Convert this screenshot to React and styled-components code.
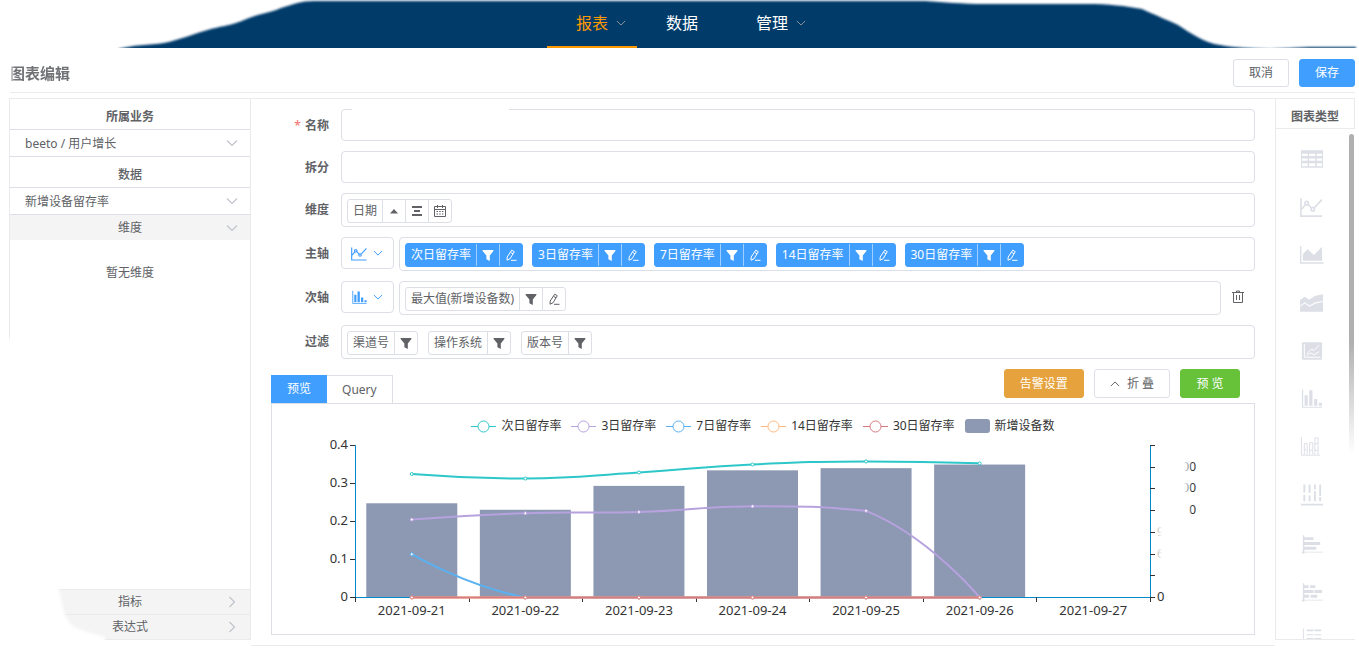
import React, { useState } from 'react'
import styled, { createGlobalStyle } from 'styled-components'

const colors = {
  navy: '#003a6b',
  orange: '#ff9900',
  blue: '#409eff',
  green: '#67c23a',
  amber: '#e6a23c',
  red: '#f56c6c',
  text: '#606266',
  border: '#dcdfe6',
  line: '#ebebeb',
  muted: '#c0c4cc',
  grey: '#f4f4f4',
}

const GlobalStyle = createGlobalStyle`
  *, *::before, *::after {
    box-sizing: border-box;
  }

  body {
    margin: 0;
    background: #fff;
    color: ${colors.text};
    font: 12px/18px "Noto Sans", "Noto Sans CJK SC", sans-serif;
  }

  button, input, select {
    font: inherit;
    color: inherit;
  }

  button {
    cursor: pointer;
  }

  svg {
    display: block;
  }
`

/* ---------- icons ---------- */

const Chevron = ({ size = 10, up, right }) => {
  let d = 'M1 3.5 6 8.5 11 3.5'
  if (up) d = 'M1 8.5 6 3.5 11 8.5'
  if (right) d = 'M3.5 1 8.5 6 3.5 11'
  return (
    <svg width={size} height={size} viewBox="0 0 12 12" fill="none" stroke="currentColor" strokeWidth="1.2" aria-hidden="true">
      <path d={d} />
    </svg>
  )
}

const FunnelIcon = () =>
  <svg width="12" height="12" viewBox="0 0 12 12" fill="currentColor" aria-hidden="true">
    <path d="M.6 1h10.8v1L7.8 6.4V12L4.4 10.3V6.4L.6 2z" />
  </svg>

const PencilIcon = () =>
  <svg width="12" height="12" viewBox="0 0 12 12" fill="none" stroke="currentColor" aria-hidden="true">
    <path d="M6.700 1.200 9.300 2.700 5 9.800 2 11.200 2.200 8zM5.500 3.300 8 4.800M6 11.300h5.500" />
  </svg>

const CaretIcon = () =>
  <svg width="12" height="12" viewBox="0 0 12 12" fill="currentColor" aria-hidden="true">
    <path d="M2 8.500 6 4l4 4.500z" />
  </svg>

const AlignIcon = () =>
  <svg width="12" height="12" viewBox="0 0 12 12" fill="currentColor" aria-hidden="true">
    <path d="M1 1h10v2H1zM3 5h6v2H3zM1 9h10v2H1z" />
  </svg>

const CalendarIcon = () =>
  <svg width="12" height="12" viewBox="0 0 12 12" fill="none" stroke="currentColor" aria-hidden="true">
    <path d="M.5 1.500h11v10H.5zM.5 4.500h11M3.500 0v3M8.500 0v3" />
    <path d="M2.500 6.500h7M2.500 9h7" strokeDasharray="1.500 1.200" />
  </svg>

const TrashIcon = () =>
  <svg width="12" height="14" viewBox="0 0 12 14" fill="none" stroke="currentColor" aria-hidden="true">
    <path d="M0 2.500h12M4.500 2.500V1h3v1.500M1.500 2.500v10h9v-10M4.500 5v5M7.500 5v5" />
  </svg>

const LineGlyph = () =>
  <g fill="none" stroke="currentColor" strokeWidth="1.700">
    <path d="M1 3v18.500h22M1.700 14.300 5.700 9.500M8.500 9.300l3.500 3.700M15 12.800l7.700-8.500" />
    <circle cx="7" cy="8" r="1.800" />
    <circle cx="13.300" cy="14.300" r="1.800" />
  </g>

const BarGlyph = () =>
  <path d="M2 2h1.300v18H23v1.200H2zM4.800 8H8v11H4.800zM9.600 3H13v16H9.600zM14.700 12H18v7h-3.300zM19.700 16H23v3h-3.300z" />

const glyphs = {
  表格: (
    <path
      fillRule="evenodd"
      d="M1 3h23v18H1zM2 6.500v2.300h6V6.500zM9.500 6.500v2.300h6.500V6.500zM17.500 6.500v2.300H23V6.500zM2 11.500v2.300h6v-2.300zM9.500 11.500v2.300h6.500v-2.300zM17.500 11.500v2.300H23v-2.300zM2 16.500v3h6v-3zM9.500 16.500v3h6.500v-3zM17.500 16.500v3H23v-3z"
    />
  ),
  折线图: <LineGlyph />,
  面积图: <path d="M0 3h1.500v16.500H24.500V21H0zM3 18v-7L8 6l6.500 6L23 3.500V18z" />,
  堆叠面积图: (
    <path d="M0 9l5-3.500 4.500 3L16 4.500 24 3v6.800L16 11.200 10 14.500 5 11.200 0 14.800zM0 16l5-3.500 5 3.500 6-3.500L24 11v10H0z" />
  ),
  多线图: (
    <>
      <rect x="2" y="3" width="21" height="18" rx="1" />
      <path
        d="M4.500 4.500v14H21.500M7 15l5-5 2.500 1.500L20 6M7 17l4-3 3.500 2L20 12.500"
        fill="none"
        stroke="#fff"
      />
    </>
  ),
  柱状图: <BarGlyph />,
  堆叠柱状图: (
    <path
      d="M1.500 1.500V20.500H21M4.500 20V8.500H7.500V20M4.500 16l1.500-1.500L7.500 16M10 20V7.500h3.300V20M10 15.500h3.300M15.500 20V2.500h3.300V20M15.500 8.500h3.300M15.500 15.500h3.300"
      fill="none"
      stroke="currentColor"
    />
  ),
  百分比柱状图: (
    <path d="M3.500 1h2v8.500h-2zM3.500 12h2v6.500h-2zM9 1h2v9H9zM9 12.500h2v6H9zM14.500 1h2v5h-2zM14.500 8h2v10.500h-2zM20 1h2v12h-2zM20 14h2v4.500h-2zM1 21h23v2H1z" />
  ),
  条形图: <path d="M3 4h1.500v2h9.500v3H4.500v2H21v3H4.500v2H17v3H4.500v2H24v1H4.500v1.500H3V22H1v-1h2z" />,
  堆叠条形图: (
    <path d="M3 4h1.500v2H9v3H4.500v2H14v3H4.500v2H9.500v3H4.500v2H24v1H4.500v1.500H3V22H1v-1h2zM10.500 6H16v3h-5.500zM15 11h8v3h-8zM11 16h7v3h-7z" />
  ),
  百分比条形图: <path d="M3 1h1v20H3zM7 2h7v2H7zM15 2h7v2h-7zM7 7h7v1H7zM15 7h7v1h-7zM7 11h7v2H7zM15 11h7v2h-7z" />,
}

const ChartGlyph = ({ name, size = 24 }) =>
  <svg width={size} height={size} viewBox="0 0 25 24" fill="currentColor" aria-hidden="true">
    {glyphs[name]}
  </svg>

/* ---------- top bar ---------- */

const TopBar = styled.header`
  position: relative;
  height: 48px;
  overflow: hidden;
`

const Ridge = styled.svg`
  position: absolute;
  inset: 0;
  width: 100%;
  height: 100%;
`

const Nav = styled.nav`
  position: relative;
  display: flex;
  justify-content: center;
  height: 100%;
  padding-left: 5px;
`

const NavLink = styled.a`
  display: flex;
  align-items: center;
  gap: 8px;
  width: 90px;
  padding-left: 29px;
  border-bottom: 2px solid ${p => (p.$active ? colors.orange : 'transparent')};
  color: ${p => (p.$active ? colors.orange : '#fff')};
  font-size: 16px;
  line-height: 24px;
  text-decoration: none;
  white-space: nowrap;

  svg {
    color: #909399;
  }
`

/* ---------- page head ---------- */

const PageHead = styled.div`
  display: flex;
  align-items: center;
  justify-content: space-between;
  height: 45px;
  margin: 0 4px 5px 10px;
  padding-top: 5px;
  border-bottom: 1px solid ${colors.line};
`

const Title = styled.h1`
  margin: 0;
  color: #707275;
  font-size: 15px;
  font-weight: 700;
  line-height: 20px;
  mask-image: linear-gradient(90deg, rgba(0, 0, 0, 0.2), #000 5px);
`

const Actions = styled.div`
  display: flex;
  gap: 10px;
`

const Button = styled.button`
  display: flex;
  align-items: center;
  justify-content: center;
  gap: 7px;
  height: ${p => (p.$roomy ? 29 : 28)}px;
  min-width: ${p => (p.$roomy ? 60 : 56)}px;
  padding: 0 15px;
  border: 1px solid ${p => p.$color || colors.border};
  border-radius: 3px;
  background: ${p => p.$color || '#fff'};
  color: ${p => (p.$color ? '#fff' : colors.text)};
  white-space: pre;
`

/* ---------- workspace ---------- */

const Workspace = styled.main`
  display: grid;
  grid-template-columns: 242px minmax(0, 1fr) 80px;
  margin: 0 4px 0 9px;
  border-top: 1px solid ${colors.line};
`

const Side = styled.aside`
  position: relative;
  display: flex;
  flex-direction: column;
  margin-bottom: 6px;
  border: solid ${colors.line};
  border-width: 0 1px 1px;
`

const SideTitle = styled.label`
  height: 31px;
  padding-top: 9px;
  border-bottom: 1px solid ${colors.border};
  font-weight: ${p => (p.$strong ? 700 : 500)};
  text-align: center;
`

const SelectWrap = styled.div`
  position: relative;
  border-bottom: 1px solid ${colors.border};

  svg {
    position: absolute;
    top: 7px;
    right: 12px;
    color: ${colors.muted};
    pointer-events: none;
  }
`

const Select = styled.select`
  display: block;
  width: 100%;
  height: 26px;
  padding: 2px 30px 0 15px;
  border: 0;
  background: none;
  appearance: none;
`

const Fold = styled.button`
  display: grid;
  grid-template-columns: 1fr auto 1fr;
  align-items: center;
  height: 25px;
  padding: 0 12px;
  border: 0;
  border-top: ${p => (p.$ruled ? `1px solid ${colors.line}` : 0)};
  background: ${colors.grey};

  svg {
    justify-self: end;
    color: ${colors.muted};
  }

  span {
    grid-column: 2;
  }
`

const Empty = styled.p`
  flex: 1;
  margin: 0;
  padding-top: 24px;
  text-align: center;
`

const Mist = styled.svg`
  position: absolute;
  left: -9px;
  bottom: -6px;
  pointer-events: none;
`

/* ---------- form ---------- */

const Editor = styled.section`
  padding: 10px 20px;
  border-bottom: 1px solid ${colors.line};
`

const Form = styled.form`
  display: grid;
  gap: 10px;
`

const Row = styled.div`
  display: grid;
  grid-template-columns: 58px minmax(0, 1fr);
  column-gap: 12px;
`

const Label = styled.label`
  padding-top: 8px;
  font-weight: 700;
  text-align: right;

  i {
    margin-right: 4px;
    color: ${colors.red};
    font-style: normal;
    font-weight: 400;
  }
`

const InputWrap = styled.div`
  position: relative;

  &::before {
    content: '';
    display: ${p => (p.$open ? 'block' : 'none')};
    position: absolute;
    top: 0;
    left: 11px;
    width: 157px;
    height: 1px;
    background: #fff;
  }
`

const Input = styled.input`
  display: block;
  width: 100%;
  height: 32px;
  padding: 0 15px;
  border: 1px solid ${colors.border};
  border-radius: 4px;
  background: #fff;
`

const Field = styled.div`
  display: flex;
  align-items: flex-start;
  gap: 5px;
`

const AxisButton = styled.button`
  display: flex;
  flex: none;
  align-items: center;
  justify-content: center;
  gap: 5px;
  width: 53px;
  height: 32px;
  padding: 0 2px 0 0;
  border: 1px solid ${colors.border};
  border-radius: 4px;
  background: #fff;
  color: ${colors.blue};
`

const TagBox = styled.div`
  display: flex;
  flex: 1;
  flex-wrap: wrap;
  gap: ${p => (p.$tight ? 9 : 10)}px;
  min-height: 34px;
  padding: 5px 5px 3px;
  border: 1px solid ${colors.border};
  border-radius: 4px;
`

const TagShell = styled.div`
  display: flex;
  height: 24px;
  border: 1px solid ${p => (p.$filled ? colors.blue : colors.border)};
  border-radius: 3px;
  background: ${p => (p.$filled ? colors.blue : '#fff')};
  color: ${p => (p.$filled ? '#fff' : colors.text)};

  span {
    padding: 2px 5px;
    white-space: nowrap;
  }

  button {
    display: grid;
    place-items: center;
    width: 23px;
    padding: 0;
    border: 0;
    border-left: 1px solid ${p => (p.$filled ? '#a0cfff' : colors.border)};
    background: none;
  }
`

const DeleteButton = styled.button`
  display: grid;
  place-items: center;
  width: 24px;
  height: 32px;
  margin-right: 5px;
  padding: 0;
  border: 0;
  background: none;
`

const Tag = ({ text, filled, tools }) =>
  <TagShell $filled={filled}>
    <span>{text}</span>
    {tools.map(([name, Icon]) =>
      <button type="button" key={name} aria-label={`${text}${name}`}><Icon /></button>
    )}
  </TagShell>

const filterTool = ['筛选', FunnelIcon]
const editTool = ['编辑', PencilIcon]
const dateTools = [['排序', CaretIcon], ['对齐', AlignIcon], ['日历', CalendarIcon]]

/* ---------- preview ---------- */

const PreviewBar = styled.div`
  display: flex;
  align-items: flex-start;
  justify-content: space-between;
  height: 34px;
  margin-top: 10px;
  padding-right: 15px;
`

const Tabs = styled.div`
  display: flex;
  margin-top: 6px;
`

const Tab = styled.button`
  height: 28px;
  padding: 0 15px;
  border: 1px solid ${p => (p.$active ? colors.blue : colors.border)};
  border-bottom-width: ${p => (p.$active ? 1 : 0)}px;
  border-left-width: ${p => (p.$active ? 1 : 0)}px;
  background: ${p => (p.$active ? colors.blue : '#fff')};
  color: ${p => (p.$active ? '#fff' : colors.text)};
`

const ChartBox = styled.div`
  padding-top: 13px;
  border: 1px solid ${colors.border};
`

const Legend = styled.div`
  display: flex;
  flex-wrap: wrap;
  justify-content: center;
  gap: 10px;
`

const LegendItem = styled.button`
  display: flex;
  align-items: center;
  gap: 5px;
  padding: 0;
  border: 0;
  background: none;
  color: #333;
`

const Plot = styled.svg`
  width: 100%;
  height: auto;
  font-size: 13px;
`

const days = ['2021-09-21', '2021-09-22', '2021-09-23', '2021-09-24', '2021-09-25', '2021-09-26', '2021-09-27']

const series = [
  { name: '次日留存率', color: '#2ec7c9', data: [0.325, 0.313, 0.329, 0.35, 0.358, 0.353] },
  { name: '3日留存率', color: '#b6a2de', data: [0.205, 0.222, 0.225, 0.24, 0.228, 0] },
  { name: '7日留存率', color: '#5ab1ef', data: [0.114, 0, 0, 0, 0, 0] },
  { name: '14日留存率', color: '#ffb980', data: [0, 0, 0, 0, 0, 0] },
  { name: '30日留存率', color: '#d87a80', data: [0, 0, 0, 0, 0, 0] },
]

const devices = { name: '新增设备数', color: '#8d98b3', data: [12950, 12050, 15350, 17500, 17800, 18300] }

const plot = { left: 83, right: 878, top: 10, bottom: 162 }
const step = (plot.right - plot.left) / days.length
const centerX = i => plot.left + step * (i + 0.5)
const rateY = v => plot.bottom - (v / 0.4) * (plot.bottom - plot.top)
const countY = v => plot.bottom - (v / 21000) * (plot.bottom - plot.top)

// Smooth curve through the points, control points kept inside the series' own bounds
const smoothPath = points => {
  const ys = points.map(p => p[1])
  const clamp = y => Math.min(Math.max(y, Math.min(...ys)), Math.max(...ys))
  let out = points[0]
  let d = `M${points[0]}`
  for (let i = 1; i < points.length; i++) {
    const p = points[i]
    const prev = points[i - 1]
    const next = points[i + 1]
    let into = p
    let nextOut = p
    if (next) {
      const before = Math.hypot(p[0] - prev[0], p[1] - prev[1])
      const after = Math.hypot(next[0] - p[0], next[1] - p[1])
      const k = before / (before + after)
      const vx = (next[0] - prev[0]) * 0.5
      const vy = (next[1] - prev[1]) * 0.5
      into = [p[0] - vx * k, clamp(p[1] - vy * k)]
      nextOut = [p[0] + vx * (1 - k), clamp(p[1] + vy * (1 - k))]
    }
    d += `C${out} ${into} ${p}`
    out = nextOut
  }
  return d
}

const RetentionChart = () =>
  <Plot viewBox="0 0 982 199" role="img" aria-label="留存率">
    <defs>
      <linearGradient id="fadeIn" gradientUnits="userSpaceOnUse" x1="912" x2="920" y1="0" y2="0">
        <stop offset="0" stopColor="#333" stopOpacity="0" />
        <stop offset="1" stopColor="#333" />
      </linearGradient>
      <linearGradient id="fadeOut" gradientUnits="userSpaceOnUse" x1="885" x2="890" y1="0" y2="0">
        <stop offset="0" stopColor="#333" stopOpacity="0.35" />
        <stop offset="1" stopColor="#333" stopOpacity="0" />
      </linearGradient>
    </defs>

    <g fill="#008acd">
      <rect x={plot.left} y={plot.top} width="1" height={plot.bottom - plot.top} />
      <rect x={plot.right} y={plot.top} width="1" height={plot.bottom - plot.top} />
      <rect x={plot.left} y={plot.bottom} width={plot.right - plot.left} height="1" />
    </g>
    {devices.data.map((v, i) =>
      <rect
        key={days[i]}
        x={centerX(i) - 45.5}
        y={countY(v)}
        width="91"
        height={plot.bottom - countY(v)}
        fill={devices.color}
      />
    )}

    <g stroke="#333" shapeRendering="crispEdges">
      {[0, 0.1, 0.2, 0.3, 0.4].map(v =>
        <line key={v} x1={plot.left - 5} x2={plot.left} y1={rateY(v) + 0.5} y2={rateY(v) + 0.5} />
      )}
      {[0, 1, 2, 3, 4, 5, 6, 7].map(n =>
        <line key={n} x1={plot.right} x2={plot.right + 5} y1={countY(n * 3000) + 0.5} y2={countY(n * 3000) + 0.5} />
      )}
      {[0, 1, 2, 3, 4, 5, 6, 7].map(n =>
        <line key={n} x1={plot.left + step * n + 0.5} x2={plot.left + step * n + 0.5} y1={plot.bottom} y2={plot.bottom + 5} />
      )}
    </g>

    {series.map(s => {
      const points = s.data.map((v, i) => [centerX(i), rateY(v) + 0.5])
      return (
        <g key={s.name} stroke={s.color}>
          <path d={smoothPath(points)} fill="none" strokeWidth="2" />
          {points.map(([x, y]) => <circle key={x} cx={x} cy={y} r="1.500" fill="#fff" />)}
        </g>
      )
    })}

    <g fill="#333" textAnchor="end">
      {[0, 0.1, 0.2, 0.3, 0.4].map(v => <text key={v} x={plot.left - 7} y={rateY(v) + 4}>{v}</text>)}
    </g>
    <g fill="#333" textAnchor="middle">
      {days.map((day, i) => <text key={day} x={centerX(i)} y={plot.bottom + 18}>{day}</text>)}
    </g>
    <text x={plot.right + 7} y={plot.bottom + 4} fill="#333">0</text>
    <g fill="url(#fadeIn)" fontSize="12" textAnchor="end">
      <text x="924" y={countY(18000) + 4}>00</text>
      <text x="924" y={countY(15000) + 4}>00</text>
      <text x="924" y={countY(12000) + 4}>0</text>
    </g>
    <g fill="url(#fadeOut)" fontSize="12">
      <text x="885" y={countY(9000) + 4}>9</text>
      <text x="885" y={countY(6000) + 4}>6</text>
    </g>
  </Plot>

/* ---------- chart types ---------- */

const TypeSide = styled.aside`
  display: flex;
  flex-direction: column;
  margin-bottom: 6px;
  border-left: 1px solid ${colors.line};
  border-bottom: 1px solid ${colors.line};
`

const TypeTitle = styled.h2`
  margin: 0;
  height: 30px;
  padding-top: 9px;
  border: solid ${colors.line};
  border-width: 0 1px 1px 0;
  font-size: 12px;
  font-weight: 700;
  line-height: 18px;
  text-align: center;
`

const TypeScroll = styled.div`
  display: flex;
  flex: 1 1 0;
  min-height: 0;
  overflow: hidden;
`

const TypeList = styled.div`
  flex: 1;
  padding: 6px 2px 0 0;
`

const TypeButton = styled.button`
  display: grid;
  place-items: center;
  width: 100%;
  height: 48px;
  padding: 0;
  border: 0;
  background: none;
  color: ${colors.border};
`

const ScrollThumb = styled.div`
  width: 5px;
  height: 320px;
  margin: 5px 1px 0 0;
  border-radius: 3px;
  background: linear-gradient(#b0b0b0 65%, rgba(176, 176, 176, 0));
`

const App = () => {
  const [tab, setTab] = useState('preview')

  return (
    <>
      <GlobalStyle />
      <TopBar>
        <Ridge viewBox="0 0 1359 48" preserveAspectRatio="none" aria-hidden="true">
          <defs>
            <filter id="soft" x="-5%" y="-20%" width="110%" height="140%">
              <feGaussianBlur stdDeviation="1.300" />
            </filter>
          </defs>
          <path
            d="M118 49C132 45 150 45 164 43C180 40 195 33 211 29C228 25 232 25 244 20C260 13 270 13 281 8C295 4 300 1 314 1H925C945 2 960 4 985 4H1085C1110 4 1125 6 1142 9C1155 15 1165 19 1178 25C1190 33 1205 43 1220 45C1235 48 1250 48 1270 49L1310 47H1356V56H118Z"
            fill={colors.navy}
            filter="url(#soft)"
          />
        </Ridge>
        <Nav>
          <NavLink href="#report" $active>报表<Chevron /></NavLink>
          <NavLink href="#data">数据</NavLink>
          <NavLink href="#manage">管理<Chevron /></NavLink>
        </Nav>
      </TopBar>

      <PageHead>
        <Title>图表编辑</Title>
        <Actions>
          <Button type="button">取消</Button>
          <Button type="button" $color={colors.blue}>保存</Button>
        </Actions>
      </PageHead>

      <Workspace>
        <Side>
          <SideTitle htmlFor="business" $strong>所属业务</SideTitle>
          <SelectWrap>
            <Select id="business"><option>beeto / 用户增长</option></Select>
            <Chevron size={12} />
          </SelectWrap>
          <SideTitle htmlFor="dataset">数据</SideTitle>
          <SelectWrap>
            <Select id="dataset"><option>新增设备留存率</option></Select>
            <Chevron size={12} />
          </SelectWrap>
          <Fold type="button"><span>维度</span><Chevron size={12} /></Fold>
          <Empty>暂无维度</Empty>
          <Fold type="button" $ruled><span>指标</span><Chevron size={12} right /></Fold>
          <Fold type="button" $ruled><span>表达式</span><Chevron size={12} right /></Fold>
          <Mist width="120" height="310" viewBox="0 0 120 310" aria-hidden="true">
            <defs>
              <filter id="mist">
                <feGaussianBlur stdDeviation="1.500" />
              </filter>
            </defs>
            <path d="M-10 4H14L40 200 57 250 62 274Q66 290 78 294Q88 298 104 302V320H-10Z" fill="#fff" filter="url(#mist)" />
          </Mist>
        </Side>

        <Editor>
          <Form onSubmit={e => e.preventDefault()}>
            <Row>
              <Label htmlFor="name"><i>*</i>名称</Label>
              <InputWrap $open><Input id="name" /></InputWrap>
            </Row>
            <Row>
              <Label htmlFor="split">拆分</Label>
              <InputWrap><Input id="split" /></InputWrap>
            </Row>
            <Row>
              <Label as="span">维度</Label>
              <TagBox><Tag text="日期" tools={dateTools} /></TagBox>
            </Row>
            <Row>
              <Label htmlFor="mainAxis">主轴</Label>
              <Field>
                <AxisButton type="button" id="mainAxis">
                  <ChartGlyph name="折线图" size={17} /><Chevron />
                </AxisButton>
                <TagBox $tight>
                  {series.map(s => <Tag key={s.name} text={s.name} filled tools={[filterTool, editTool]} />)}
                </TagBox>
              </Field>
            </Row>
            <Row>
              <Label htmlFor="subAxis">次轴</Label>
              <Field>
                <AxisButton type="button" id="subAxis">
                  <ChartGlyph name="柱状图" size={17} /><Chevron />
                </AxisButton>
                <TagBox><Tag text="最大值(新增设备数)" tools={[filterTool, editTool]} /></TagBox>
                <DeleteButton type="button" aria-label="删除次轴"><TrashIcon /></DeleteButton>
              </Field>
            </Row>
            <Row>
              <Label as="span">过滤</Label>
              <TagBox>
                {['渠道号', '操作系统', '版本号'].map(t => <Tag key={t} text={t} tools={[filterTool]} />)}
              </TagBox>
            </Row>
          </Form>

          <PreviewBar>
            <Tabs role="tablist">
              <Tab type="button" role="tab" $active={tab === 'preview'} onClick={() => setTab('preview')}>预览</Tab>
              <Tab type="button" role="tab" $active={tab === 'query'} onClick={() => setTab('query')}>Query</Tab>
            </Tabs>
            <Actions>
              <Button type="button" $roomy $color={colors.amber}>告警设置</Button>
              <Button type="button" $roomy><Chevron up />折 叠</Button>
              <Button type="button" $roomy $color={colors.green}>预 览</Button>
            </Actions>
          </PreviewBar>

          <ChartBox>
            <Legend>
              {series.map(s =>
                <LegendItem type="button" key={s.name}>
                  <svg width="25" height="14" fill="#fff" stroke={s.color} aria-hidden="true">
                    <path d="M0 7.500H25" />
                    <circle cx="12.500" cy="7.500" r="5.500" />
                  </svg>
                  {s.name}
                </LegendItem>
              )}
              <LegendItem type="button">
                <svg width="25" height="14" aria-hidden="true">
                  <rect width="25" height="14" rx="3" fill={devices.color} />
                </svg>
                {devices.name}
              </LegendItem>
            </Legend>
            <RetentionChart />
          </ChartBox>
        </Editor>

        <TypeSide>
          <TypeTitle>图表类型</TypeTitle>
          <TypeScroll>
            <TypeList>
              {Object.keys(glyphs).map(name =>
                <TypeButton type="button" key={name} aria-label={name}><ChartGlyph name={name} /></TypeButton>
              )}
            </TypeList>
            <ScrollThumb />
          </TypeScroll>
        </TypeSide>
      </Workspace>
    </>
  )
}

export default App
